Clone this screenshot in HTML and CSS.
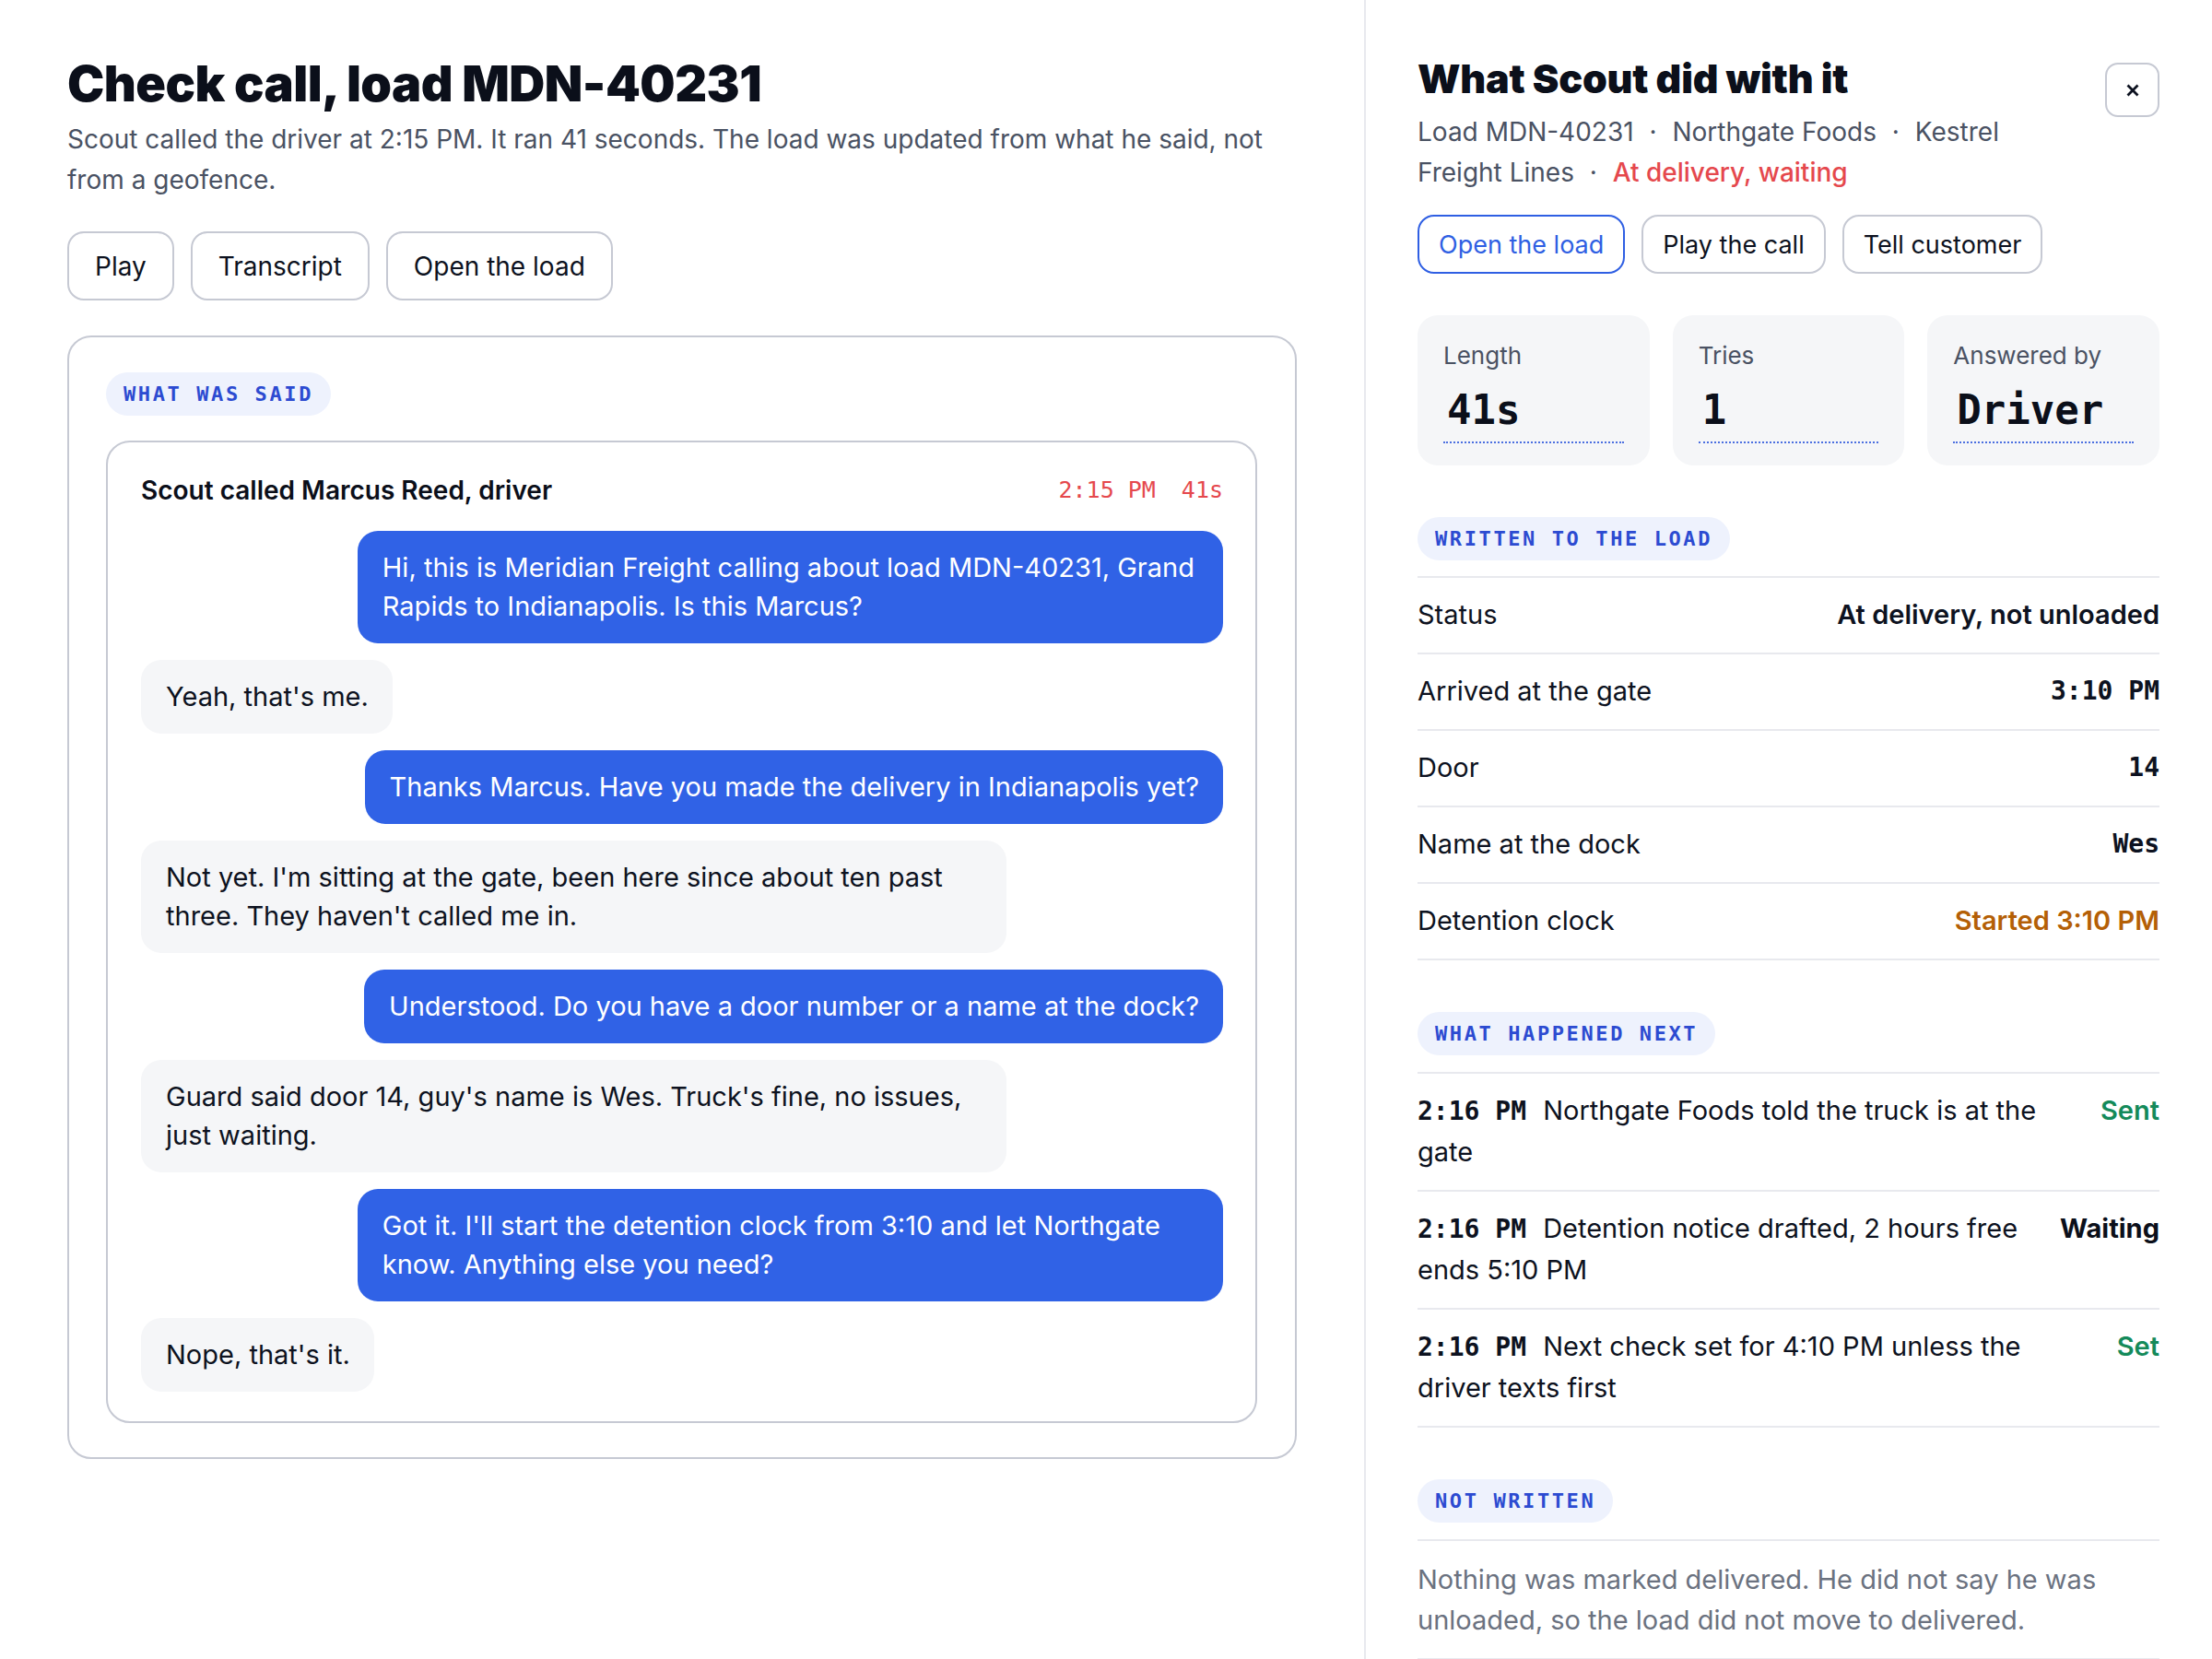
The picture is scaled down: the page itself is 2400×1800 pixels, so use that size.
FILE: index.html
```html
<!DOCTYPE html>
<html lang="en">
<head>
<meta charset="utf-8">
<title>Check call, load MDN-40231</title>
<link rel="stylesheet" href="styles.css">
</head>
<body>
<div class="app">
  <main class="call">
    <h1 class="call-title">Check call, load MDN-40231</h1>
    <p class="call-sub">Scout called the driver at 2:15 PM. It ran 41 seconds. The load was updated from what he said, not from a geofence.</p>
    <div class="actions">
      <button class="btn" type="button">Play</button>
      <button class="btn" type="button">Transcript</button>
      <button class="btn" type="button">Open the load</button>
    </div>

    <section class="panel">
      <h2 class="tag">What was said</h2>
      <div class="convo">
        <div class="convo-head">
          <span class="convo-who">Scout called Marcus Reed, driver</span>
          <span class="convo-meta"><span>2:15 PM</span><span>41s</span></span>
        </div>
        <div class="msgs">
          <p class="msg msg-out">Hi, this is Meridian Freight calling about load MDN-40231, Grand Rapids to Indianapolis. Is this Marcus?</p>
          <p class="msg msg-in">Yeah, that's me.</p>
          <p class="msg msg-out">Thanks Marcus. Have you made the delivery in Indianapolis yet?</p>
          <p class="msg msg-in">Not yet. I'm sitting at the gate, been here since about ten past three. They haven't called me in.</p>
          <p class="msg msg-out">Understood. Do you have a door number or a name at the dock?</p>
          <p class="msg msg-in">Guard said door 14, guy's name is Wes. Truck's fine, no issues, just waiting.</p>
          <p class="msg msg-out">Got it. I'll start the detention clock from 3:10 and let Northgate know. Anything else you need?</p>
          <p class="msg msg-in">Nope, that's it.</p>
        </div>
      </div>
    </section>
  </main>

  <aside class="drawer">
    <div class="drawer-head">
      <div class="drawer-heading">
        <h2 class="drawer-title">What Scout did with it</h2>
        <p class="drawer-meta">Load MDN-40231 <span class="sep">·</span> Northgate Foods <span class="sep">·</span> Kestrel Freight Lines <span class="sep">·</span> <span class="state-waiting">At delivery, waiting</span></p>
      </div>
      <button class="close" type="button" aria-label="Close">
        <svg width="14" height="14" viewBox="0 0 14 14" aria-hidden="true"><path d="M1.5 1.5 L12.5 12.5 M12.5 1.5 L1.5 12.5" stroke="#0d1220" stroke-width="2.8" fill="none"/></svg>
      </button>
    </div>

    <div class="drawer-actions">
      <button class="btn btn-sm btn-primary" type="button">Open the load</button>
      <button class="btn btn-sm" type="button">Play the call</button>
      <button class="btn btn-sm" type="button">Tell customer</button>
    </div>

    <div class="stats">
      <div class="stat">
        <div class="stat-label">Length</div>
        <div class="stat-value">41s</div>
      </div>
      <div class="stat">
        <div class="stat-label">Tries</div>
        <div class="stat-value">1</div>
      </div>
      <div class="stat">
        <div class="stat-label">Answered by</div>
        <div class="stat-value">Driver</div>
      </div>
    </div>

    <section class="section">
      <h3 class="tag">Written to the load</h3>
      <dl class="rows">
        <div class="row"><dt>Status</dt><dd class="val-strong">At delivery, not unloaded</dd></div>
        <div class="row"><dt>Arrived at the gate</dt><dd class="val-mono">3:10 PM</dd></div>
        <div class="row"><dt>Door</dt><dd class="val-mono">14</dd></div>
        <div class="row"><dt>Name at the dock</dt><dd class="val-mono">Wes</dd></div>
        <div class="row"><dt>Detention clock</dt><dd class="val-strong val-warn">Started 3:10 PM</dd></div>
      </dl>
    </section>

    <section class="section">
      <h3 class="tag">What happened next</h3>
      <ul class="events">
        <li class="event">
          <p class="event-text"><span class="event-time">2:16 PM</span> Northgate Foods told the truck is at the gate</p>
          <span class="event-state ok">Sent</span>
        </li>
        <li class="event">
          <p class="event-text"><span class="event-time">2:16 PM</span> Detention notice drafted, 2 hours free ends 5:10 PM</p>
          <span class="event-state pending">Waiting</span>
        </li>
        <li class="event">
          <p class="event-text"><span class="event-time">2:16 PM</span> Next check set for 4:10 PM unless the driver texts first</p>
          <span class="event-state ok">Set</span>
        </li>
      </ul>
    </section>

    <section class="section">
      <h3 class="tag">Not written</h3>
      <p class="note">Nothing was marked delivered. He did not say he was unloaded, so the load did not move to delivered.</p>
    </section>
  </aside>
</div>
</body>
</html>
```

FILE: styles.css
```css
* {
  box-sizing: border-box;
}

html,
body {
  margin: 0;
}

body {
  font-family: Inter, "Noto Sans", "Liberation Sans", sans-serif;
  font-size: 29px;
  line-height: 1.55;
  color: #0d1220;
  background: #ffffff;
}

.app {
  display: grid;
  grid-template-columns: 1fr 920px;
  min-height: 100vh;
}

/* ---------- left: the call ---------- */

.call {
  padding: 60px 73px 40px;
}

.call-title {
  margin: 0;
  font-size: 54px;
  line-height: 62px;
  font-weight: 900;
  letter-spacing: -0.01em;
  color: #0b0f1a;
}

.call-sub {
  margin: 7px 0 0;
  font-size: 28px;
  line-height: 44px;
  color: #4a5263;
}

.actions {
  display: flex;
  gap: 18px;
  margin-top: 34px;
}

.btn {
  font: inherit;
  font-size: 28px;
  line-height: 1;
  height: 75px;
  padding: 0 28px;
  border: 2px solid #c6c9d3;
  border-radius: 18px;
  background: #ffffff;
  color: #0d1220;
}

.panel {
  margin-top: 38px;
  border: 2px solid #c6c9d3;
  border-radius: 26px;
  padding: 38px 41px 37px 40px;
}

.tag {
  display: block;
  width: fit-content;
  margin: 0;
  padding: 10px 19px;
  border-radius: 999px;
  background: #eef2fd;
  color: #2c4bd1;
  font-family: "DejaVu Sans Mono", "Liberation Mono", monospace;
  font-weight: 700;
  font-size: 22px;
  line-height: 27px;
  letter-spacing: 2.6px;
  text-transform: uppercase;
}

.convo {
  margin-top: 27px;
  border: 2px solid #c6c9d3;
  border-radius: 26px;
  padding: 32px 35px 32px 36px;
}

.convo-head {
  display: flex;
  justify-content: space-between;
  align-items: center;
  font-size: 28px;
  line-height: 40px;
}

.convo-who {
  font-weight: 600;
  color: #0b0f1a;
}

.convo-meta {
  display: flex;
  gap: 28px;
  font-family: "DejaVu Sans Mono", "Liberation Mono", monospace;
  font-size: 25px;
  color: #e5484d;
}

.msgs {
  display: flex;
  flex-direction: column;
  gap: 18px;
  margin-top: 24px;
}

.msg {
  margin: 0;
  max-width: 80%;
  padding: 19px 26px 19px 27px;
  border-radius: 22px;
  line-height: 42px;
}

.msg-out {
  align-self: flex-end;
  background: #3062e6;
  color: #ffffff;
}

.msg-in {
  align-self: flex-start;
  background: #f5f6f8;
  color: #0d1220;
}

/* ---------- right: what was done ---------- */

.drawer {
  border-left: 2px solid #e8e9ee;
  padding: 61px 57px 0 56px;
}

.drawer-head {
  display: flex;
  align-items: flex-start;
  gap: 24px;
}

.drawer-heading {
  flex: 1;
}

.drawer-title {
  margin: 0;
  font-size: 43px;
  line-height: 48px;
  font-weight: 900;
  letter-spacing: -0.005em;
  color: #0b0f1a;
}

.drawer-meta {
  margin: 12px 0 0;
  font-size: 28px;
  line-height: 44px;
  color: #4a5263;
}

.sep {
  margin: 0 9px;
}

.state-waiting {
  color: #e5484d;
  font-weight: 500;
}

.close {
  flex: none;
  width: 59px;
  height: 59px;
  margin-top: 7px;
  display: flex;
  align-items: center;
  justify-content: center;
  padding: 0;
  border: 2px solid #c6c9d3;
  border-radius: 14px;
  background: #ffffff;
}

.drawer-actions {
  display: flex;
  gap: 18px;
  margin-top: 24px;
}

.btn-sm {
  height: 64px;
  font-size: 27px;
  padding: 0 21px;
}

.btn-primary {
  border-color: #2f5fe3;
  color: #2f5fe3;
}

.stats {
  display: grid;
  grid-template-columns: repeat(3, 1fr);
  gap: 25px;
  margin-top: 45px;
}

.stat {
  background: #f5f6f8;
  border-radius: 22px;
  padding: 26px 28px 24px;
}

.stat-label {
  font-size: 26px;
  line-height: 36px;
  color: #4a5263;
}

.stat-value {
  margin-top: 15px;
  padding: 0 0 8px 4px;
  border-bottom: 2px dotted #4b6fe0;
  font-family: "DejaVu Sans Mono", "Liberation Mono", monospace;
  font-weight: 700;
  font-size: 44px;
  line-height: 52px;
  color: #0b0f1a;
}

.section {
  margin-top: 56px;
}

.rows {
  margin: 17px 0 0;
  border-top: 2px solid #e8e9ee;
}

.row {
  display: flex;
  justify-content: space-between;
  align-items: center;
  padding: 18px 0 19px;
  border-bottom: 2px solid #e8e9ee;
  line-height: 44px;
}

.row dt,
.row dd {
  margin: 0;
}

.val-strong {
  font-weight: 600;
}

.val-mono {
  font-family: "DejaVu Sans Mono", "Liberation Mono", monospace;
  font-size: 28px;
  font-weight: 700;
}

.val-warn {
  color: #b45f06;
}

.events {
  list-style: none;
  margin: 18px 0 0;
  padding: 0;
  border-top: 2px solid #e8e9ee;
}

.event {
  display: flex;
  align-items: flex-start;
  gap: 40px;
  padding: 18px 0 19px;
  border-bottom: 2px solid #e8e9ee;
  line-height: 44px;
}

.event-text {
  flex: 1;
  margin: 0;
}

.event-time {
  font-family: "DejaVu Sans Mono", "Liberation Mono", monospace;
  font-size: 28px;
  font-weight: 700;
  margin-right: 10px;
}

.event-state {
  flex: none;
  font-weight: 600;
}

.event-state.ok {
  color: #148a5a;
}

.event-state.pending {
  color: #0b0f1a;
  font-weight: 700;
}

.note {
  margin: 18px 0 0;
  padding: 20px 0 19px;
  border-top: 2px solid #e8e9ee;
  border-bottom: 2px solid #e8e9ee;
  line-height: 44px;
  color: #6b7280;
}
```
